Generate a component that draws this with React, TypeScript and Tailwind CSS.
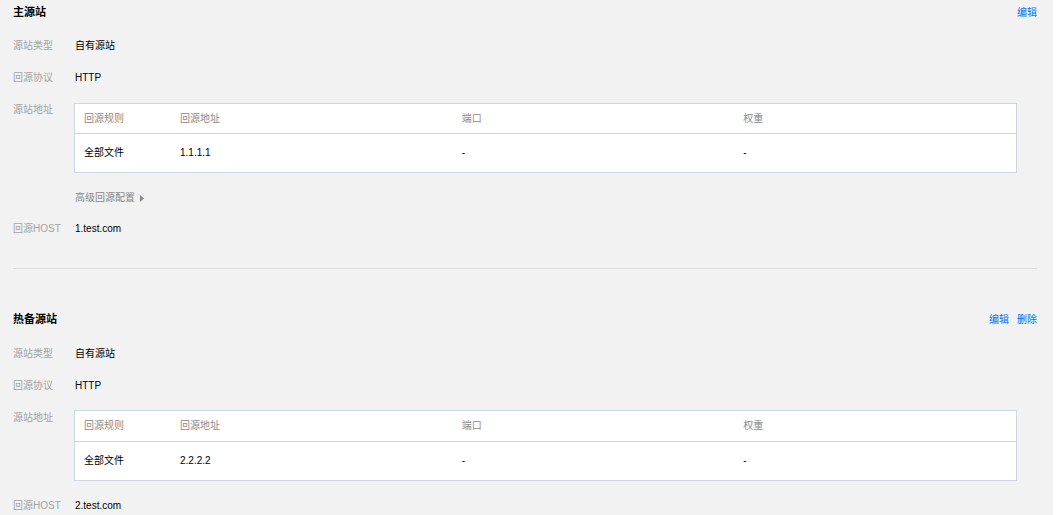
import React from 'react';

interface OriginRow {
  rule: string;
  address: string;
  port: string;
  weight: string;
}

interface OriginSection {
  title: string;
  actions: string[];
  type: string;
  protocol: string;
  rows: OriginRow[];
  host: string;
  advanced?: boolean;
}

const sections: OriginSection[] = [
  {
    title: '主源站',
    actions: ['编辑'],
    type: '自有源站',
    protocol: 'HTTP',
    rows: [{ rule: '全部文件', address: '1.1.1.1', port: '-', weight: '-' }],
    host: '1.test.com',
    advanced: true,
  },
  {
    title: '热备源站',
    actions: ['编辑', '删除'],
    type: '自有源站',
    protocol: 'HTTP',
    rows: [{ rule: '全部文件', address: '2.2.2.2', port: '-', weight: '-' }],
    host: '2.test.com',
  },
];

const FormItem: React.FC<{ label: string; children: React.ReactNode; className?: string }> = ({
  label,
  children,
  className = '',
}) => (
  <div className={`flex ${className}`}>
    <div className="w-[62px] shrink-0 leading-5 text-[#a3a3a3]">{label}</div>
    <div className="flex-1 min-w-0 leading-5 text-black">{children}</div>
  </div>
);

const OriginTable: React.FC<{ rows: OriginRow[]; first?: boolean }> = ({ rows, first }) => (
  <div
    className={`-ml-px mr-5 border border-[#cfd5e1] bg-white ${first ? 'mt-[3px]' : 'mt-[2px]'}`}
  >
    <div
      className={`grid grid-cols-[96px_1fr_1fr_1fr] items-center text-[#8a8a8a] border-b border-[#cfd5e1] ${
        first ? 'h-[30px]' : 'h-[31px]'
      }`}
    >
      <div className="pl-[9px]">回源规则</div>
      <div className="pl-[9px]">回源地址</div>
      <div className="pl-[9px]">端口</div>
      <div className="pl-[9px]">权重</div>
    </div>
    {rows.map((r, i) => (
      <div key={i} className="grid grid-cols-[96px_1fr_1fr_1fr] h-[38px] items-center text-black">
        <div className="pl-[9px]">{r.rule}</div>
        <div className="pl-[9px]">{r.address}</div>
        <div className="pl-[9px]">{r.port}</div>
        <div className="pl-[9px]">{r.weight}</div>
      </div>
    ))}
  </div>
);

const Section: React.FC<{ data: OriginSection; first?: boolean }> = ({ data, first }) => (
  <div>
    <div className="flex items-center justify-between h-5">
      <h3 className="font-bold text-[11px] text-black">{data.title}</h3>
      <div className="flex gap-2">
        {data.actions.map((a) => (
          <a key={a} className="text-[#006eff] cursor-pointer">
            {a}
          </a>
        ))}
      </div>
    </div>

    <FormItem label="源站类型" className={first ? 'mt-[14px]' : 'mt-[15px]'}>
      {data.type}
    </FormItem>
    <FormItem label="回源协议" className="mt-3">{data.protocol}</FormItem>
    <FormItem label="源站地址" className="mt-3">
      <OriginTable rows={data.rows} first={first} />
      {data.advanced && (
        <div className="mt-[15px] flex items-center gap-[5px] text-[#888]">
          <span>高级回源配置</span>
          <svg width="4" height="7" viewBox="0 0 4 7" fill="#888">
            <path d="M0 0 L4 3.5 L0 7 Z" />
          </svg>
        </div>
      )}
    </FormItem>
    <FormItem label="回源HOST" className={data.advanced ? 'mt-[11px]' : 'mt-[15px]'}>
      {data.host}
    </FormItem>
  </div>
);

export default function App() {
  return (
    <div
      className="w-[1053px] min-h-[515px] bg-[#f2f2f2] pl-[13px] pr-4 pt-[2px] text-[10px]"
      style={{ fontFamily: '"Liberation Sans", "Noto Sans CJK SC", sans-serif' }}
    >
      <Section data={sections[0]} first />
      <div className="mt-[29px] h-px bg-[#dcdcdc]" />
      <div className="mt-[40px]">
        <Section data={sections[1]} />
      </div>
    </div>
  );
}
